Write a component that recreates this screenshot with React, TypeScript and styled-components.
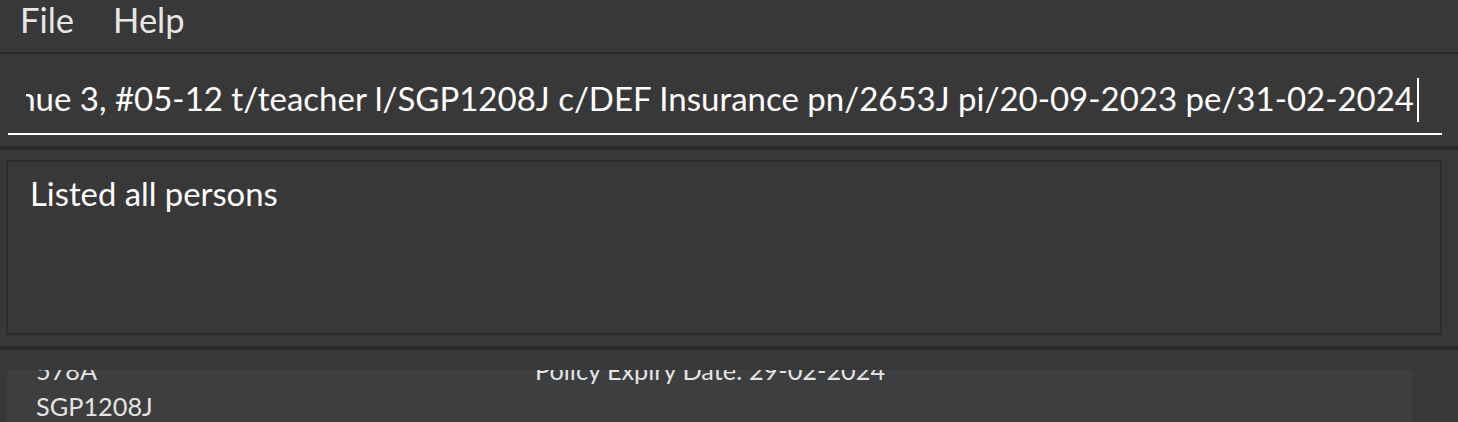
import React from "react";
import styled, { createGlobalStyle } from "styled-components";

const GlobalStyle = createGlobalStyle`
  html, body {
    margin: 0;
    padding: 0;
    background: #383838;
    font-family: "Lato", "Liberation Sans", sans-serif;
  }
  * { box-sizing: border-box; }
`;

const Window = styled.div`
  width: 1458px;
  height: 422px;
  overflow: hidden;
  background: #383838;
  display: flex;
  flex-direction: column;
`;

const MenuBar = styled.nav`
  height: 52px;
  flex: none;
  display: flex;
  align-items: flex-start;
  gap: 39px;
  padding-left: 20px;
  background: #383838;
`;

const MenuItem = styled.span`
  font-size: 34.5px;
  line-height: 40px;
  color: rgba(255, 255, 255, 0.9);
`;

const Divider = styled.div<{ $size: number }>`
  flex: none;
  height: ${(p) => p.$size}px;
  background: #2b2b2b;
`;

const CommandPane = styled.section`
  flex: none;
  padding: 24px 16px 11px 8px;
`;

const CommandField = styled.div`
  padding: 0 23px 11px 18px;
  border-bottom: 2px solid #ffffff;
`;

const CommandLine = styled.div`
  height: 44px;
  display: flex;
  justify-content: flex-end;
  overflow: hidden;
`;

const CommandText = styled.span`
  flex: none;
  align-self: flex-start;
  white-space: nowrap;
  font-size: 33px;
  line-height: 40px;
  color: #ffffff;
`;

const Caret = styled.span`
  flex: none;
  width: 2px;
  height: 44px;
  margin-left: 3px;
  background: #ffffff;
`;

const ResultPane = styled.section`
  flex: none;
  padding: 10px 16px 11px 6px;
`;

const ResultBox = styled.div`
  height: 175px;
  border: 2px solid #2c2c2c;
  padding: 12px 22px;
  font-size: 32.8px;
  line-height: 40px;
  color: #ffffff;
`;

const ListPane = styled.section`
  flex: 1;
  min-height: 0;
  padding: 20px 46px 0 7px;
`;

const PersonCard = styled.article`
  height: 100%;
  overflow: hidden;
  background: #3c3e3f;
  padding-left: 29px;
`;

const CardGrid = styled.div`
  margin-top: -18px;
  display: grid;
  grid-template-columns: 499px 1fr;
`;

const Column = styled.div`
  display: flex;
  flex-direction: column;
`;

const CardLine = styled.div`
  font-size: 25.3px;
  line-height: 36px;
  color: #e4e4e4;
  white-space: nowrap;
`;

const command =
  "add n/Amy Tan p/91234567 e/amytan@example.com a/Blk 123 Ang Mo Kio Avenue 3, #05-12 t/teacher l/SGP1208J c/DEF Insurance pn/2653J pi/20-09-2023 pe/31-02-2024";

export default function App() {
  return (
    <>
      <GlobalStyle />
      <Window>
        <MenuBar>
          <MenuItem>File</MenuItem>
          <MenuItem>Help</MenuItem>
        </MenuBar>
        <Divider $size={2} />
        <CommandPane>
          <CommandField>
            <CommandLine>
              <CommandText>{command}</CommandText>
              <Caret />
            </CommandLine>
          </CommandField>
        </CommandPane>
        <Divider $size={4} />
        <ResultPane>
          <ResultBox>Listed all persons</ResultBox>
        </ResultPane>
        <Divider $size={4} />
        <ListPane>
          <PersonCard>
            <CardGrid>
              <Column>
                <CardLine>578A</CardLine>
                <CardLine>SGP1208J</CardLine>
                <CardLine>teacher</CardLine>
              </Column>
              <Column>
                <CardLine>Policy Expiry Date: 29-02-2024</CardLine>
              </Column>
            </CardGrid>
          </PersonCard>
        </ListPane>
      </Window>
    </>
  );
}
